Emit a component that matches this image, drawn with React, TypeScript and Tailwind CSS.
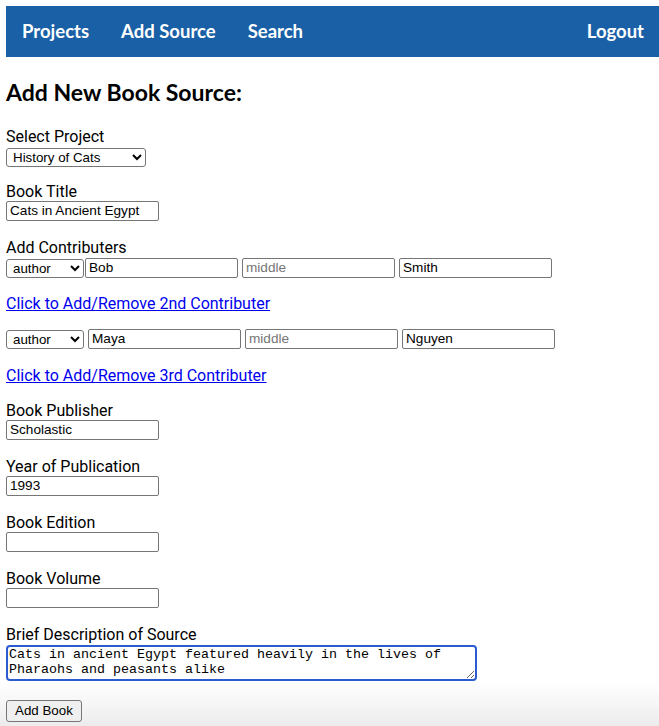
import { useState } from "react";

const field =
  "block h-[20px] w-[153px] rounded-[2px] border border-[#767676] bg-white px-[3px] font-['Liberation_Sans',Arial,sans-serif] text-[13.6px] text-black placeholder:text-[#757575]";
const selectCls =
  "block h-[19px] rounded-[3px] border border-[#767676] bg-white pl-[2px] font-['Liberation_Sans',Arial,sans-serif] text-[13.33px] text-black";
const label = "block h-[18px] leading-[18px] text-[16px] text-black";
const link = "block h-[18px] leading-[18px] text-[16px] text-[#0000ee] underline";

function Contributor({
  first,
  last,
  tight,
}: {
  first: string;
  last: string;
  tight?: boolean;
}) {
  return (
    <div className="flex items-center gap-[4px]">
      <select defaultValue="author" className={`${selectCls} w-[78px]`}>
        <option value="author">author</option>
        <option value="editor">editor</option>
        <option value="translator">translator</option>
      </select>
      <input
        defaultValue={first}
        className={`${field} ${tight ? "-ml-[3px] w-[152px]" : ""}`}
      />
      <input placeholder="middle" className={field} />
      <input defaultValue={last} className={field} />
    </div>
  );
}

function Field({ name, value }: { name: string; value?: string }) {
  return (
    <div className="mb-[18px]">
      <label className={label}>{name}</label>
      <input defaultValue={value} className={field} />
    </div>
  );
}

export default function App() {
  const [desc] = useState(
    "Cats in ancient Egypt featured heavily in the lives of Pharaohs and peasants alike"
  );

  return (
    <div className="min-h-[726px] bg-[linear-gradient(to_bottom,#ffffff_682px,#ececec_726px)] pt-[6px] font-['Roboto',sans-serif]">
      <nav className="ml-[6px] flex h-[51px] items-center bg-[#1a60a6] font-['Lato',sans-serif] text-[18.5px] font-bold text-white">
        <a className="px-[16px]">Projects</a>
        <a className="px-[16px]">Add Source</a>
        <a className="px-[16px]">Search</a>
        <a className="ml-auto px-[15px]">Logout</a>
      </nav>

      <form className="px-[6px]">
        <h2 className="mb-[22px] mt-[21px] font-['Lato',sans-serif] text-[23px] font-bold leading-[28px] text-black">
          Add New Book Source:
        </h2>

        <div className="mb-[16px]">
          <label className={label}>Select Project</label>
          <select
            defaultValue="cats"
            className={`${selectCls} mt-[2px] w-[140px]`}
          >
            <option value="cats">History of Cats</option>
            <option value="dogs">History of Dogs</option>
          </select>
        </div>

        <Field name="Book Title" value="Cats in Ancient Egypt" />

        <div className="mb-[17px]">
          <label className={label}>Add Contributers</label>
          <div className="mt-[1px]">
            <Contributor first="Bob" last="Smith" tight />
          </div>
        </div>

        <a className={link}>Click to Add/Remove 2nd Contributer</a>

        <div className="mb-[18px] mt-[16px]">
          <Contributor first="Maya" last="Nguyen" />
        </div>

        <a className={`${link} mb-[17px]`}>Click to Add/Remove 3rd Contributer</a>

        <Field name="Book Publisher" value="Scholastic" />
        <Field name="Year of Publication" value="1993" />
        <Field name="Book Edition" />
        <Field name="Book Volume" />

        <div className="mb-[19px]">
          <label className={label}>Brief Description of Source</label>
          <textarea
            defaultValue={desc}
            className="mt-[1px] block h-[36px] w-[471px] rounded-[4px] border-2 border-[#2a5bd0] bg-white px-[1px] font-['Liberation_Mono',monospace] text-[13.33px] leading-[15px] text-black outline-none"
          />
        </div>

        <button
          type="button"
          className="block h-[22px] rounded-[3px] border border-[#767676] bg-[#efefef] px-[8px] font-['Liberation_Sans',Arial,sans-serif] text-[13.33px] text-black"
        >
          Add Book
        </button>
      </form>
    </div>
  );
}
